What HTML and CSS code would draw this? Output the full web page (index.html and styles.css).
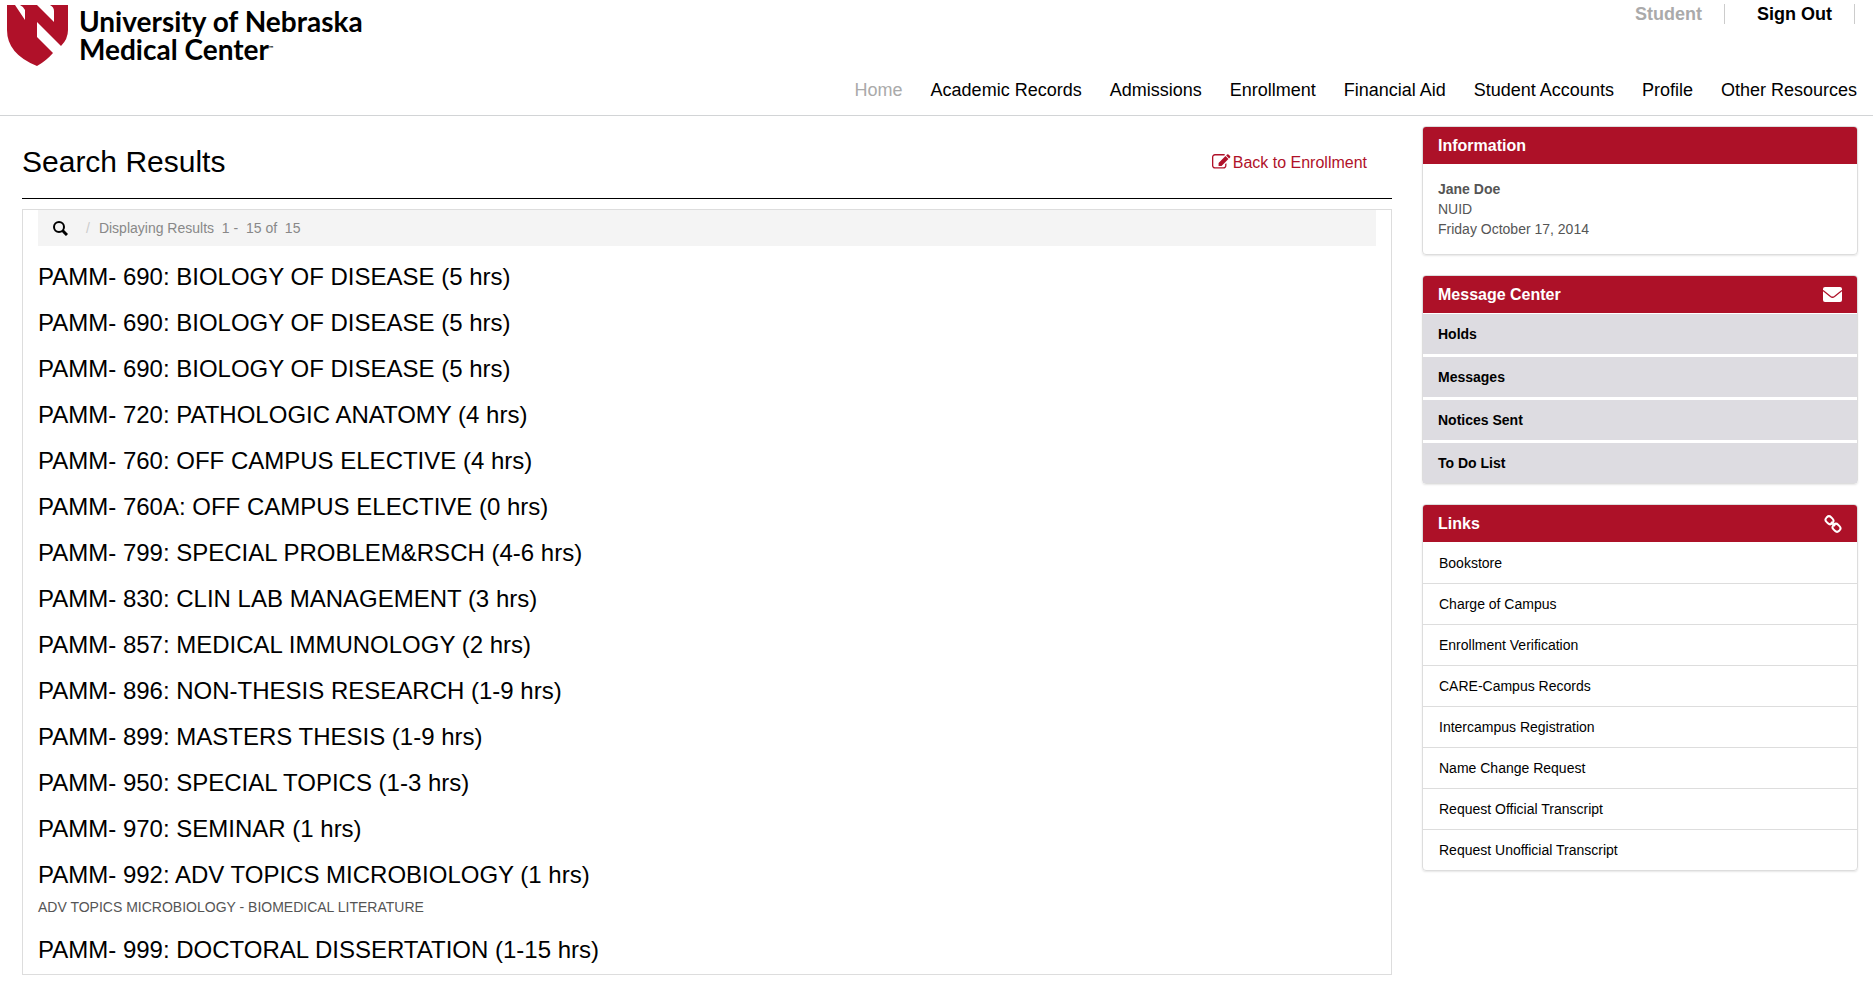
FILE: index.html
```html
<!DOCTYPE html>
<html lang="en">
<head>
  <meta charset="UTF-8">
  <meta name="viewport" content="width=device-width, initial-scale=1.0">
  <title>Search Results - University of Nebraska Medical Center</title>
  <link rel="stylesheet" href="styles.css">
</head>
<body>

  <header class="site-header">
    <div class="top-bar">
      <a class="logo" href="#">
        <svg class="logo-mark" viewBox="0 0 61 61" aria-hidden="true">
          <path fill="#b01129" d="M0 0 H8 L18 15 V5 Q17 2 13 0 H30 L47 17 V6 Q47 2 43 0 H61 V25 Q61 34 54 41 L30 17 V32 L46 48 Q39 56 30 61 Q0 49 0 25 Z"/>
        </svg>
        <span class="logo-text">University of Nebraska<br>Medical Center<small class="tm">™</small></span>
      </a>
      <ul class="account">
        <li><a class="current" href="#">Student</a></li>
        <li><a href="#">Sign Out</a></li>
      </ul>
    </div>
    <nav class="main-nav">
      <a class="current" href="#">Home</a>
      <a href="#">Academic Records</a>
      <a href="#">Admissions</a>
      <a href="#">Enrollment</a>
      <a href="#">Financial Aid</a>
      <a href="#">Student Accounts</a>
      <a href="#">Profile</a>
      <a href="#">Other Resources</a>
    </nav>
  </header>

  <div class="page">
    <main class="content">
      <div class="title-row">
        <h1>Search Results</h1>
        <a class="back-link" href="#">
          <svg class="icon-edit" viewBox="0 0 1850 1536" aria-hidden="true"><path fill="currentColor" d="M1408 930v190q0 119-84 204t-204 84H288q-119 0-204-84T0 1120V288q0-119 84-204T288 0h832q63 0 117 25 15 7 18 23 3 17-9 29l-49 49q-14 14-32 8-23-6-45-6H288q-66 0-113 47t-47 113v832q0 66 47 113t113 47h832q66 0 113-47t47-113V994q0-13 9-22l64-64q15-15 35-7t20 29zM1312 192l288 288-672 672H640V864zM1756 324l-92 92-288-288 92-92q28-28 68-28t68 28l152 152q28 28 28 68t-28 68z"/></svg>
          Back to Enrollment
        </a>
      </div>

      <section class="results">
        <div class="result-bar">
          <button class="search-btn" type="button" aria-label="Search">
            <svg class="icon-search" viewBox="0 0 15 15" aria-hidden="true"><g fill="none" stroke="currentColor" stroke-width="2"><circle cx="6" cy="6" r="5"/><path stroke-width="3" d="M9.500 9.500L14 14"/></g></svg>
          </button>
          <span class="slash">/</span>
          <span>Displaying Results&nbsp; 1 -&nbsp; 15 of&nbsp; 15</span>
        </div>
        <ul class="courses">
          <li>PAMM- 690: BIOLOGY OF DISEASE (5 hrs)</li>
          <li>PAMM- 690: BIOLOGY OF DISEASE (5 hrs)</li>
          <li>PAMM- 690: BIOLOGY OF DISEASE (5 hrs)</li>
          <li>PAMM- 720: PATHOLOGIC ANATOMY (4 hrs)</li>
          <li>PAMM- 760: OFF CAMPUS ELECTIVE (4 hrs)</li>
          <li>PAMM- 760A: OFF CAMPUS ELECTIVE (0 hrs)</li>
          <li>PAMM- 799: SPECIAL PROBLEM&amp;RSCH (4-6 hrs)</li>
          <li>PAMM- 830: CLIN LAB MANAGEMENT (3 hrs)</li>
          <li>PAMM- 857: MEDICAL IMMUNOLOGY (2 hrs)</li>
          <li>PAMM- 896: NON-THESIS RESEARCH (1-9 hrs)</li>
          <li>PAMM- 899: MASTERS THESIS (1-9 hrs)</li>
          <li>PAMM- 950: SPECIAL TOPICS (1-3 hrs)</li>
          <li>PAMM- 970: SEMINAR (1 hrs)</li>
          <li>PAMM- 992: ADV TOPICS MICROBIOLOGY (1 hrs)
            <p class="topic">ADV TOPICS MICROBIOLOGY - BIOMEDICAL LITERATURE</p>
          </li>
          <li>PAMM- 999: DOCTORAL DISSERTATION (1-15 hrs)</li>
        </ul>
      </section>
    </main>

    <aside class="sidebar">
      <section class="panel">
        <h2>Information</h2>
        <div class="panel-body">
          <strong>Jane Doe</strong><br>
          NUID<br>
          Friday October 17, 2014
        </div>
      </section>

      <section class="panel">
        <h2>Message Center
          <svg class="icon-mail" viewBox="0 0 19 15" aria-hidden="true"><rect width="19" height="15" rx="2" fill="#fff"/><path d="M0 3.500L7.500 9.500Q9.500 11 11.500 9.500L19 3.500" fill="none" stroke="#ad1128" stroke-width="1.300"/></svg>
        </h2>
        <ul class="messages">
          <li><a href="#">Holds</a></li>
          <li><a href="#">Messages</a></li>
          <li><a href="#">Notices Sent</a></li>
          <li><a href="#">To Do List</a></li>
        </ul>
      </section>

      <section class="panel">
        <h2>Links
          <svg class="icon-link" viewBox="0 0 18 18" aria-hidden="true"><g fill="none" stroke="#fff" stroke-width="2"><rect x="1.500" y="2" width="8" height="6.500" rx="3" transform="rotate(45 5.500 5.250)"/><rect x="8.500" y="9.500" width="8" height="6.500" rx="3" transform="rotate(45 12.500 12.750)"/><path d="M7 7l4 4"/></g></svg>
        </h2>
        <ul class="links">
          <li><a href="#">Bookstore</a></li>
          <li><a href="#">Charge of Campus</a></li>
          <li><a href="#">Enrollment Verification</a></li>
          <li><a href="#">CARE-Campus Records</a></li>
          <li><a href="#">Intercampus Registration</a></li>
          <li><a href="#">Name Change Request</a></li>
          <li><a href="#">Request Official Transcript</a></li>
          <li><a href="#">Request Unofficial Transcript</a></li>
        </ul>
      </section>
    </aside>
  </div>

</body>
</html>
```
FILE: styles.css
```css
/* Base */
* {
  box-sizing: border-box;
}

body {
  margin: 0;
  font-family: "Liberation Sans", Arial, sans-serif;
  font-size: 14px;
  line-height: 20px;
  color: #555;
  background: #fff;
}

a {
  color: #000;
  text-decoration: none;
}

ul {
  list-style: none;
  margin: 0;
  padding: 0;
}

/* Header */
.site-header {
  border-bottom: 1px solid #d2d4d6;
}

.top-bar {
  display: flex;
  justify-content: space-between;
  align-items: flex-start;
  height: 66px;
}

.logo {
  display: flex;
  gap: 11px;
  padding: 5px 0 0 7px;
}

.logo-mark {
  width: 61px;
  height: 61px;
}

.logo-text {
  padding-top: 2px;
  font-family: Lato, sans-serif;
  font-size: 28px;
  font-weight: 700;
  line-height: 28px;
}

.tm {
  font-size: 6px;
  line-height: 1px;
  vertical-align: 10px;
}

.account {
  display: flex;
  padding: 4px 18px 0 0;
  font-size: 18px;
  font-weight: bold;
}

.account li {
  padding-right: 22px;
  margin-left: 32px;
  border-right: 1px solid #ccc;
}

.main-nav {
  display: flex;
  justify-content: flex-end;
  gap: 28px;
  padding: 14px 16px 15px;
  font-size: 18px;
}

.account .current,
.main-nav .current {
  color: #aaa;
}

/* Page columns */
.page {
  display: flex;
  gap: 30px;
  padding: 10px 15px 8px 22px;
}

.content {
  flex: 1;
}

.title-row {
  display: flex;
  justify-content: space-between;
  height: 73px;
  padding: 16px 25px 0 0;
  border-bottom: 1px solid #000;
}

h1 {
  margin: 0;
  font-size: 30px;
  font-weight: normal;
  line-height: 40px;
  color: #000;
}

.back-link {
  display: flex;
  gap: 2px;
  padding-top: 11px;
  font-size: 16px;
  color: #b01129;
}

.icon-edit {
  width: 19px;
  height: 16px;
  margin-top: 1px;
}

/* Results */
.results {
  margin-top: 10px;
  padding: 0 15px 1px;
  border: 1px solid #ddd;
}

.result-bar {
  display: flex;
  align-items: center;
  height: 36px;
  padding-left: 15px;
  background: #f4f4f4;
  color: #888;
}

.search-btn {
  display: flex;
  padding: 0;
  border: 0;
  background: none;
  color: #000;
}

.icon-search {
  width: 15px;
  height: 15px;
}

.slash {
  padding: 0 9px 0 18px;
  color: #ccc;
}

.courses {
  padding-top: 8px;
}

.courses li {
  padding: 8px 0;
  font-size: 24px;
  line-height: 30px;
  color: #000;
}

.topic {
  margin: 7px 0 2px;
  font-size: 14px;
  line-height: 20px;
  color: #555;
}

/* Sidebar */
.sidebar {
  width: 436px;
}

.panel {
  margin-bottom: 20px;
  border: 1px solid #ddd;
  border-radius: 4px;
  box-shadow: 0 1px 2px rgba(0, 0, 0, 0.1);
}

.panel h2 {
  display: flex;
  justify-content: space-between;
  align-items: center;
  height: 37px;
  margin: 0;
  padding: 0 15px;
  border-radius: 3px 3px 0 0;
  background: #ad1128;
  color: #fff;
  font-size: 16px;
}

.panel-body {
  padding: 15px;
}

.icon-mail {
  width: 19px;
  height: 15px;
}

.icon-link {
  width: 18px;
  height: 18px;
}

.messages,
.links {
  padding-top: 1px;
}

.messages {
  display: flex;
  flex-direction: column;
  gap: 3px;
}

.messages a {
  display: block;
  padding: 10px 15px;
  background: #dddce1;
  font-weight: bold;
}

.links a {
  display: block;
  padding: 10px 16px;
}

.links li + li {
  border-top: 1px solid #ddd;
}
```
